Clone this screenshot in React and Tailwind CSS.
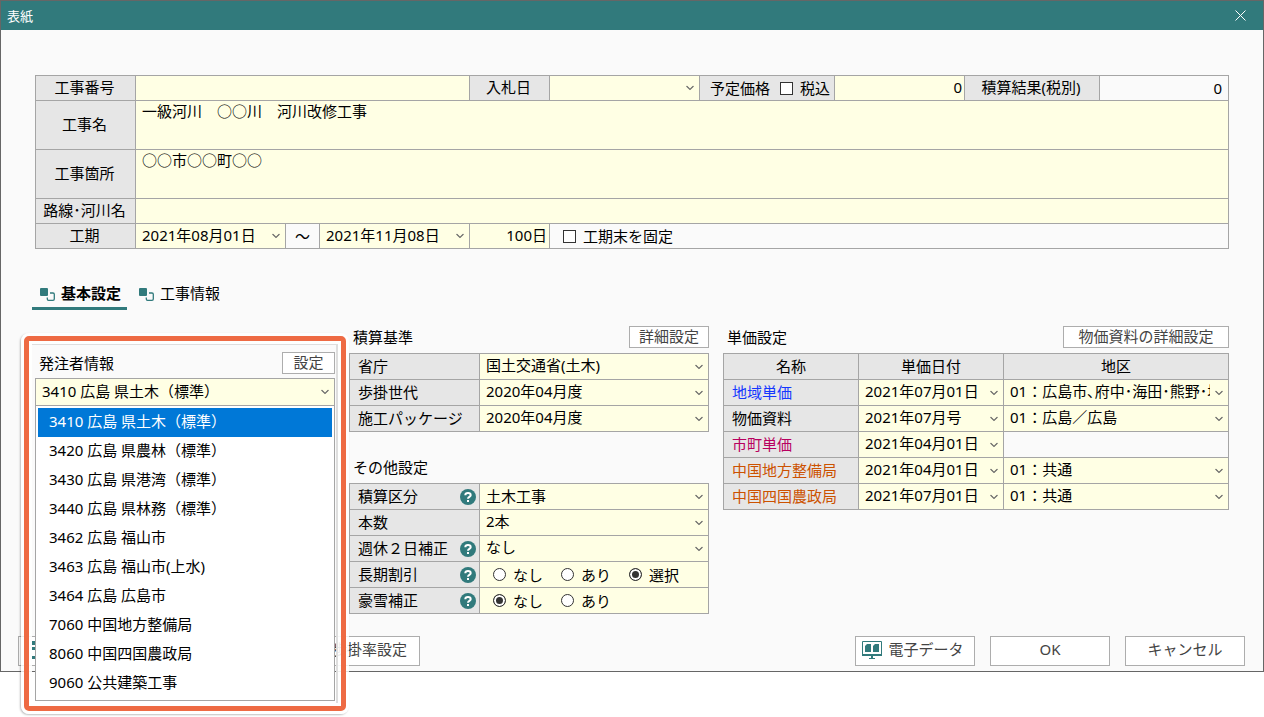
import React from "react";

const FONT = "font-['Noto_Sans','Noto_Sans_CJK_JP',sans-serif]";

const CLIENTS = [
  "3410 広島 県土木（標準）",
  "3420 広島 県農林（標準）",
  "3430 広島 県港湾（標準）",
  "3440 広島 県林務（標準）",
  "3462 広島 福山市",
  "3463 広島 福山市(上水)",
  "3464 広島 広島市",
  "7060 中国地方整備局",
  "8060 中国四国農政局",
  "9060 公共建築工事",
];

const PRICES = [
  { name: "地域単価", color: "text-[#1437ff]", date: "2021年07月01日", area: "01：広島市､府中･海田･熊野･坂" },
  { name: "物価資料", color: "text-black", date: "2021年07月号", area: "01：広島／広島" },
  { name: "市町単価", color: "text-[#b80060]", date: "2021年04月01日", area: null },
  { name: "中国地方整備局", color: "text-[#cc5200]", date: "2021年04月01日", area: "01：共通" },
  { name: "中国四国農政局", color: "text-[#cc5200]", date: "2021年07月01日", area: "01：共通" },
];

function Chevron() {
  return (
    <svg
      viewBox="0 0 8 5"
      className="pointer-events-none absolute right-[5px] top-1/2 h-[5px] w-2 -translate-y-1/2"
      fill="none"
      stroke="#666"
      strokeWidth="1.1"
    >
      <path d="M0.5 0.5 L4 4 L7.5 0.5" />
    </svg>
  );
}

function Select({ label, value, className = "" }) {
  return (
    <div className={`relative bg-[#ffffe4] ${className}`}>
      <select
        aria-label={label}
        defaultValue={value}
        className="block h-full w-full appearance-none truncate bg-transparent pb-0.5 pl-1.5 pr-[18px] text-clip outline-none"
      >
        <option>{value}</option>
      </select>
      <Chevron />
    </div>
  );
}

function Label({ htmlFor, className = "", children }) {
  return (
    <label
      htmlFor={htmlFor}
      className={`flex shrink-0 items-center justify-center whitespace-nowrap bg-[#e6e6e6] pb-0.5 pr-0.5 ${className}`}
    >
      {children}
    </label>
  );
}

function Checkbox({ children }) {
  return (
    <label className="flex items-center gap-[7px] whitespace-nowrap">
      <input
        type="checkbox"
        className="h-[13px] w-[13px] appearance-none border border-[#333] bg-white checked:bg-[#333]"
      />
      {children}
    </label>
  );
}

function Radio({ name, children, defaultChecked }) {
  return (
    <label className="flex w-[68px] items-center gap-[7px] whitespace-nowrap">
      <input
        type="radio"
        name={name}
        defaultChecked={defaultChecked}
        className="h-[13px] w-[13px] appearance-none rounded-full border border-[#333] bg-white checked:bg-[#333] checked:shadow-[inset_0_0_0_2px_white]"
      />
      {children}
    </label>
  );
}

function Button({ className = "", children }) {
  return (
    <button
      type="button"
      className={`flex items-center justify-center whitespace-nowrap border border-[#adadad] bg-white pb-0.5 text-[#444] ${className}`}
    >
      {children}
    </button>
  );
}

function TabIcon() {
  return (
    <svg viewBox="0 0 15 13" className="h-[13px] w-[15px]" fill="none">
      <rect x="0" y="0" width="8" height="8" rx="1" fill="#317a7c" />
      <path
        d="M10 5 H13 Q14.3 5 14.3 6.3 V11 Q14.3 12.3 13 12.3 H8.5 Q7.3 12.3 7.3 11 V9.5"
        stroke="#317a7c"
        strokeWidth="1.3"
      />
    </svg>
  );
}

function MonitorIcon() {
  return (
    <svg viewBox="0 0 20 18" className="h-[18px] w-5" fill="none">
      <path d="M0.5 0.5 H19.5 V13.5 H0.5 Z" stroke="#317a7c" fill="#fff" />
      <path
        d="M0 13 H20 V15 H0 Z M9 15 H11 V17 H9 Z M7 17 H13 V18 H7 Z M3 5 L5 3 H9 V11 H3 Z M11 5 L13 3 H17 V11 H11 Z"
        fill="#317a7c"
      />
    </svg>
  );
}

function RateIcon() {
  return (
    <svg viewBox="0 0 20 18" className="h-[18px] w-5" fill="#317a7c">
      <path d="M0 0 H20 V4 H0 Z M0 6 H20 V9 H0 Z M0 15 H20 V18 H0 Z" />
    </svg>
  );
}

function HelpIcon() {
  return (
    <svg viewBox="0 0 16 16" className="h-4 w-4" fill="none">
      <circle cx="8" cy="8" r="8" fill="#317a7c" />
      <path
        d="M5.3 6.2 C5.3 3.2 10.7 3.2 10.7 6.2 C10.7 7.9 8 7.9 8 9.7"
        stroke="#fff"
        strokeWidth="2"
      />
      <rect x="7" y="11" width="2" height="2" fill="#fff" />
    </svg>
  );
}

function SectionHeader({ title, action }) {
  return (
    <div className="mb-[5px] flex h-[22px] items-center justify-between pl-1">
      <h2>{title}</h2>
      {action}
    </div>
  );
}

function SettingRow({ label, help, children }) {
  return (
    <div className="flex h-[26px] border-b border-[#a5a5a5]">
      <div className="flex w-[130px] shrink-0 items-center justify-between border-r border-[#a5a5a5] bg-[#e6e6e6] pl-2 pr-[3px]">
        <span className="pb-0.5">{label}</span>
        {help && (
          <button type="button" aria-label={`${label} ヘルプ`}>
            <HelpIcon />
          </button>
        )}
      </div>
      <div className="min-w-0 flex-1 bg-[#ffffe4]">{children}</div>
    </div>
  );
}

function CoverForm() {
  return (
    <div className="divide-y divide-[#a5a5a5] border border-[#a5a5a5]">
      <div className="flex h-[25px] divide-x divide-[#a5a5a5]">
        <Label htmlFor="number" className="w-[100px]">工事番号</Label>
        <input id="number" className="min-w-0 flex-1 bg-[#ffffe4] px-1.5 outline-none" />
        <Label className="w-20">入札日</Label>
        <Select label="入札日" value="" className="w-[150px]" />
        <div className="flex w-[135px] items-center gap-[10px] bg-[#e6e6e6] pl-[10px]">
          <span>予定価格</span>
          <Checkbox>税込</Checkbox>
        </div>
        <input
          aria-label="予定価格"
          defaultValue="0"
          className="w-[130px] bg-[#ffffe4] px-0.5 pb-0.5 text-right outline-none"
        />
        <Label htmlFor="result" className="w-[135px]">積算結果(税別)</Label>
        <output id="result" className="w-[128px] pr-1.5 text-right leading-6">0</output>
      </div>
      <div className="flex h-[49px] divide-x divide-[#a5a5a5]">
        <Label htmlFor="name" className="w-[100px]">工事名</Label>
        <textarea
          id="name"
          defaultValue="一級河川　○○川　河川改修工事"
          className="flex-1 resize-none bg-[#ffffe4] px-1.5 outline-none"
        />
      </div>
      <div className="flex h-[49px] divide-x divide-[#a5a5a5]">
        <Label htmlFor="place" className="w-[100px]">工事箇所</Label>
        <textarea
          id="place"
          defaultValue="○○市○○町○○"
          className="flex-1 resize-none bg-[#ffffe4] px-1.5 outline-none"
        />
      </div>
      <div className="flex h-[25px] divide-x divide-[#a5a5a5]">
        <Label htmlFor="river" className="w-[100px]">路線･河川名</Label>
        <input id="river" className="min-w-0 flex-1 bg-[#ffffe4] px-1.5 outline-none" />
      </div>
      <div className="flex h-6 divide-x divide-[#a5a5a5]">
        <Label className="w-[100px]">工期</Label>
        <Select label="開始日" value="2021年08月01日" className="w-[150px]" />
        <div className="flex w-[34px] items-center justify-center">～</div>
        <Select label="終了日" value="2021年11月08日" className="w-[150px]" />
        <input
          aria-label="日数"
          defaultValue="100日"
          className="w-20 bg-[#ffffe4] px-0.5 pb-0.5 text-right outline-none"
        />
        <div className="flex flex-1 items-center pl-[13px]">
          <Checkbox>工期末を固定</Checkbox>
        </div>
      </div>
    </div>
  );
}

function ClientPanel() {
  return (
    <section className="relative w-[300px] shrink-0 pt-[26px]">
      <div className="mb-1 flex h-[22px] items-center justify-between pl-1">
        <h2>発注者情報</h2>
        <Button className="h-[22px] w-[53px]">設定</Button>
      </div>
      <div className="relative">
        <Select
          label="発注者"
          value={CLIENTS[0]}
          className="h-[28px] border border-[#a5a5a5]"
        />
        <ul
          role="listbox"
          aria-label="発注者一覧"
          className="absolute inset-x-0 top-[27px] z-10 border border-[#a5a5a5] bg-white p-0.5"
        >
          {CLIENTS.map((client, i) => (
            <li
              key={client}
              role="option"
              aria-selected={i === 0}
              className={`flex h-[29px] items-center pb-[3px] pl-[11px] ${i === 0 ? "bg-[#0078d7] text-white" : ""}`}
            >
              {client}
            </li>
          ))}
        </ul>
      </div>
      {/* highlight frame around the open list */}
      <div className="pointer-events-none absolute -left-[14px] top-[7px] h-[381px] w-[328px] rounded-lg border-[3px] border-white/80 shadow-[-1px_1px_2px_rgba(0,0,0,0.25)]">
        <div className="h-full rounded-[5px] border-[5px] border-[#ee6a43]">
          <div className="h-full border-[3px] border-white/90">
            <div className="h-full border-r-2 border-t border-[#dedede]" />
          </div>
        </div>
      </div>
    </section>
  );
}

function StandardPanel() {
  return (
    <section className="w-[360px] shrink-0">
      <SectionHeader
        title="積算基準"
        action={<Button className="h-[22px] w-20">詳細設定</Button>}
      />
      <div className="border border-b-0 border-[#a5a5a5]">
        <SettingRow label="省庁">
          <Select label="省庁" value="国土交通省(土木)" className="h-full pb-0.5" />
        </SettingRow>
        <SettingRow label="歩掛世代">
          <Select label="歩掛世代" value="2020年04月度" className="h-full pb-0.5" />
        </SettingRow>
        <SettingRow label="施工パッケージ">
          <Select label="施工パッケージ" value="2020年04月度" className="h-full pb-0.5" />
        </SettingRow>
      </div>

      <div className="mt-6">
        <SectionHeader title="その他設定" />
        <div className="border border-b-0 border-[#a5a5a5]">
          <SettingRow label="積算区分" help>
            <Select label="積算区分" value="土木工事" className="h-full" />
          </SettingRow>
          <SettingRow label="本数">
            <Select label="本数" value="2本" className="h-full pb-0.5" />
          </SettingRow>
          <SettingRow label="週休２日補正" help>
            <Select label="週休２日補正" value="なし" className="h-full pb-0.5" />
          </SettingRow>
          <SettingRow label="長期割引" help>
            <div className="flex h-full items-center pl-[13px]">
              <Radio name="discount">なし</Radio>
              <Radio name="discount">あり</Radio>
              <Radio name="discount" defaultChecked>選択</Radio>
            </div>
          </SettingRow>
          <SettingRow label="豪雪補正" help>
            <div className="flex h-full items-center pl-[13px]">
              <Radio name="snow" defaultChecked>なし</Radio>
              <Radio name="snow">あり</Radio>
            </div>
          </SettingRow>
        </div>
      </div>
    </section>
  );
}

function PricePanel() {
  return (
    <section className="min-w-0 flex-1">
      <SectionHeader
        title="単価設定"
        action={<Button className="h-[22px] w-[166px]">物価資料の詳細設定</Button>}
      />
      <table className="w-full table-fixed border-separate border-spacing-0 border-l border-t border-[#a5a5a5]">
        <thead>
          <tr className="h-[26px] bg-[#e6e6e6]">
            <th className="w-[135px] border-b border-r border-[#a5a5a5] p-0 pb-0.5 font-normal">名称</th>
            <th className="w-[145px] border-b border-r border-[#a5a5a5] p-0 pb-0.5 font-normal">単価日付</th>
            <th className="border-b border-r border-[#a5a5a5] p-0 pb-0.5 font-normal">地区</th>
          </tr>
        </thead>
        <tbody>
          {PRICES.map((row) => (
            <tr key={row.name} className="h-[26px]">
              <th
                scope="row"
                className={`border-b border-r border-[#a5a5a5] bg-[#e6e6e6] p-0 pb-0.5 pl-2 text-left font-normal ${row.color}`}
              >
                {row.name}
              </th>
              <td className="border-b border-r border-[#a5a5a5] p-0">
                <Select
                  label={`${row.name} 単価日付`}
                  value={row.date}
                  className="h-[25px] pb-0.5"
                />
              </td>
              <td className="border-b border-r border-[#a5a5a5] p-0">
                {row.area && (
                  <Select
                    label={`${row.name} 地区`}
                    value={row.area}
                    className="h-[25px] pb-0.5"
                  />
                )}
              </td>
            </tr>
          ))}
        </tbody>
      </table>
    </section>
  );
}

export default function App() {
  return (
    <div className={`min-h-screen bg-white text-[15px] leading-5 text-black ${FONT}`}>
      <div className="border border-[#666] bg-[#fafafa]">
        <header className="flex h-[29px] items-center justify-between bg-[#317a7c] pl-1.5 pr-[17px] text-white">
          <h1 className="text-[13px]">表紙</h1>
          <button type="button" aria-label="閉じる">
            <svg viewBox="0 0 11 11" className="h-[11px] w-[11px]" stroke="#fff" fill="none">
              <path d="M0.5 0.5 L10.5 10.5 M10.5 0.5 L0.5 10.5" />
            </svg>
          </button>
        </header>

        <main className="px-[34px] pt-[45px]">
          <CoverForm />

          <div role="tablist" className="-ml-[3px] mt-[33px] flex gap-1">
            <button
              type="button"
              role="tab"
              aria-selected="true"
              className="flex h-7 items-center gap-1.5 border-b-[3px] border-[#317a7c] pl-2 pr-1.5 font-bold"
            >
              <TabIcon />
              <span className="pb-[3px]">基本設定</span>
            </button>
            <button
              type="button"
              role="tab"
              aria-selected="false"
              className="flex h-7 items-center gap-1.5 border-b-[3px] border-transparent pl-2 pr-1.5"
            >
              <TabIcon />
              <span className="pb-[3px]">工事情報</span>
            </button>
          </div>

          <div className="mt-4 flex gap-[14px]">
            <ClientPanel />
            <StandardPanel />
            <PricePanel />
          </div>
        </main>

        <footer className="mt-[22px] flex justify-between pb-[5px] pl-[17px] pr-[18px]">
          <Button className="h-[30px] w-[402px] pl-[13px] pr-3">
            <RateIcon />
            <span className="ml-auto pb-0.5">歩掛率設定</span>
          </Button>
          <div className="flex gap-[15px]">
            <Button className="h-[30px] w-[120px] gap-1.5 pr-1">
              <MonitorIcon />
              <span className="pb-0.5">電子データ</span>
            </Button>
            <Button className="h-[30px] w-[120px]">
              <span className="pb-0.5">OK</span>
            </Button>
            <Button className="h-[30px] w-[120px]">
              <span className="pb-0.5">キャンセル</span>
            </Button>
          </div>
        </footer>
      </div>
    </div>
  );
}
